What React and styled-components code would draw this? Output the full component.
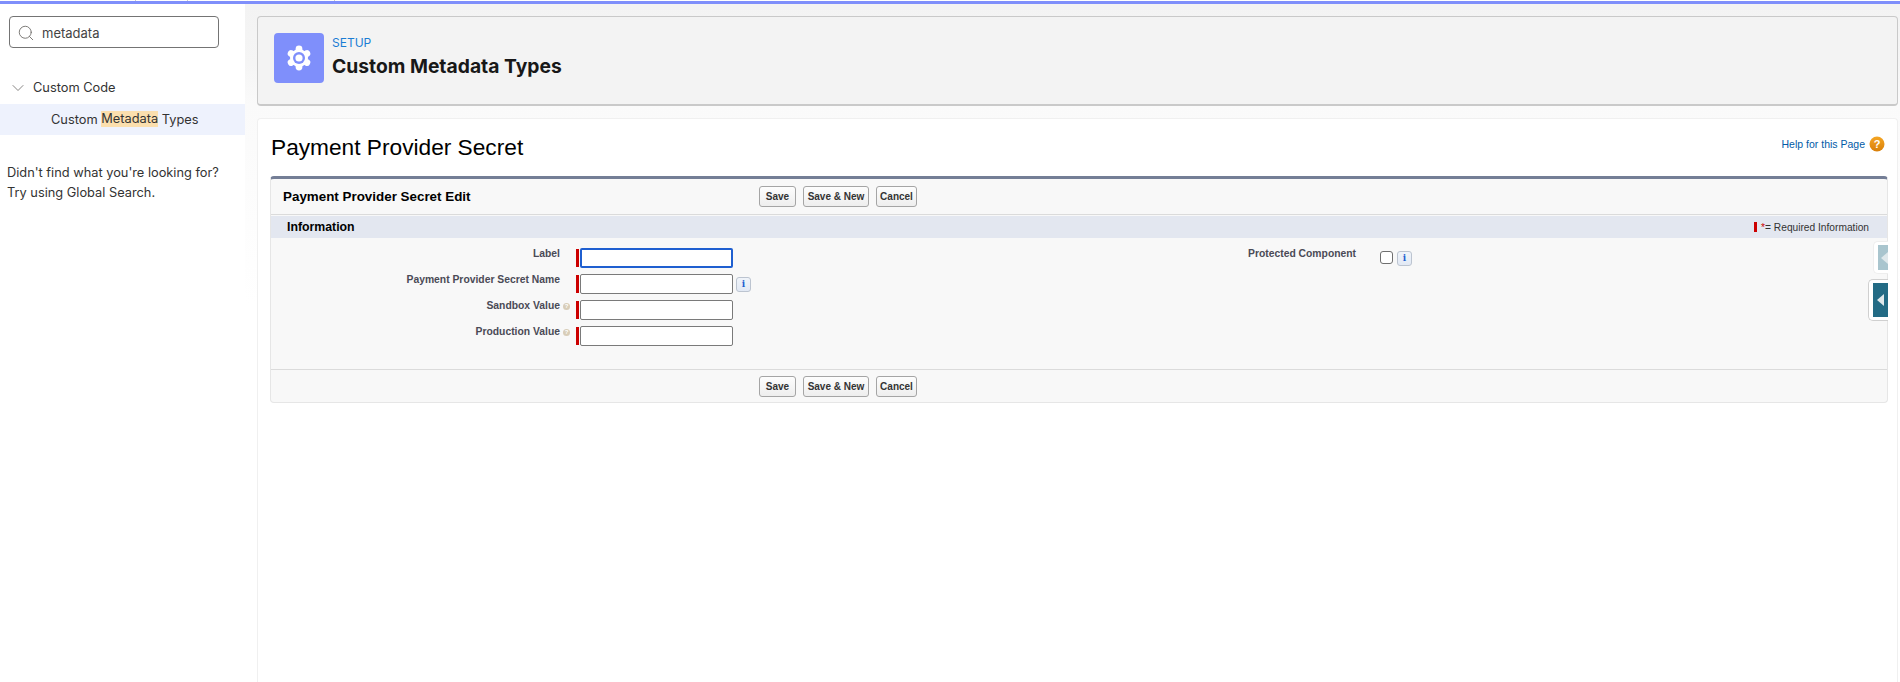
import React from "react";
import styled, { createGlobalStyle } from "styled-components";
import { Search, ChevronDown } from "lucide-react";

const GlobalStyle = createGlobalStyle`
  html, body { margin: 0; padding: 0; height: 100%; background: #fff; }
  #root { height: 100%; }
  * { box-sizing: border-box; }
`;

const Page = styled.div`
  width: 1900px;
  height: 682px;
  overflow: hidden;
  display: flex;
  flex-direction: column;
  background: #fff;
`;

const TopLine = styled.div`
  height: 4px;
  flex: none;
  border-bottom: 3px solid #7f8ffb;
  background:
    linear-gradient(#ccc, #ccc) 135px 0 / 1px 1px no-repeat,
    linear-gradient(#ccc, #ccc) 187px 0 / 1px 1px no-repeat,
    linear-gradient(#ccc, #ccc) 334px 0 / 1px 1px no-repeat,
    #fff;
`;

const Body = styled.div`
  flex: 1;
  display: flex;
  min-height: 0;
`;

/* left setup tree */
const Sidebar = styled.aside`
  width: 245px;
  flex: none;
  background: #fff;
  font-family: Inter, "Noto Sans", sans-serif;
  color: #333;
  padding-top: 12px;
`;

const SearchBox = styled.div`
  margin-left: 9px;
  width: 210px;
  height: 32px;
  border: 1px solid #747474;
  border-radius: 4px;
  display: flex;
  align-items: center;
  padding: 1px 0 0 7px;
  gap: 7px;
  font-size: 13px;
  color: #444;
`;

const TreeHead = styled.div`
  margin-top: 30px;
  height: 19px;
  display: flex;
  align-items: center;
  padding-left: 8px;
  gap: 5px;
  font-size: 12.8px;
`;

const TreeItem = styled.div`
  margin-top: 7px;
  height: 31px;
  background: #eef2fd;
  display: flex;
  align-items: center;
  padding: 0 0 1px 51px;
  font-size: 12.8px;
  white-space: pre;
`;

const Mark = styled.span`
  background: #fbdfae;
  line-height: 16px;
`;

const NotFound = styled.p`
  margin: 28px 0 0 7px;
  font-size: 12.8px;
  line-height: 20px;
`;

const Main = styled.main`
  flex: 1;
  min-width: 0;
  padding: 12px 2px 0 12px;
  background: linear-gradient(#f3f3f3 0, #f5f5f5 60px, #fafafa 100px, #fff 300px);
  display: flex;
  flex-direction: column;
  gap: 12px;
`;

const HeaderCard = styled.header`
  height: 90px;
  flex: none;
  border: 1px solid #c9c9c9;
  border-bottom-width: 2px;
  border-radius: 4px;
  background: #f3f3f3;
  display: flex;
  align-items: center;
  padding: 0 0 5px 16px;
  gap: 8px;
  font-family: Inter, "Noto Sans", sans-serif;
`;

const IconTile = styled.div`
  width: 50px;
  height: 50px;
  border-radius: 4px;
  background: #7f8ffb;
  display: flex;
  align-items: center;
  justify-content: center;
`;

const HeaderText = styled.div`
  display: flex;
  flex-direction: column;
  gap: 4px;
  padding-bottom: 4px;
`;

const Crumb = styled.div`
  font-size: 12px;
  line-height: 15px;
  color: #1b7dd4;
`;

const HeaderTitle = styled.h1`
  margin: 0;
  font-size: 19.3px;
  line-height: 24px;
  font-weight: 700;
  color: #181818;
`;

const ContentCard = styled.section`
  flex: 1;
  background: #fff;
  border-radius: 4px 4px 0 0;
  border: 1px solid #f0f0f0;
  border-bottom: none;
  padding: 0 9px 0 12px;
  position: relative;
  font-family: "Liberation Sans", Arial, sans-serif;
`;

const TitleRow = styled.div`
  height: 57px;
  display: flex;
  align-items: center;
  justify-content: space-between;
  padding: 0 0 1px 1px;
`;

const PageTitle = styled.h2`
  margin: 0;
  font-size: 22.7px;
  font-weight: 400;
  color: #000;
`;

const HelpLink = styled.a`
  display: flex;
  align-items: center;
  gap: 4px;
  font-size: 10.5px;
  color: #015ba7;
  margin: -6px 3px 0 0;
`;

const Panel = styled.div`
  border: 1px solid #e6e6e6;
  border-top: 3px solid #747e96;
  border-radius: 4px;
  background: #f8f8f8;
`;

const PanelHead = styled.div`
  height: 36px;
  display: flex;
  align-items: center;
  border-bottom: 1px solid #dbdbdb;
  padding-left: 12px;
`;

const PanelTitle = styled.div`
  width: 476px;
  flex: none;
  font-size: 13.4px;
  font-weight: 700;
  color: #000;
`;

const ButtonRow = styled.div`
  display: flex;
  gap: 7px;
`;

const Btn = styled.button`
  height: 21px;
  width: ${(p) => p.$w}px;
  padding: 0;
  border: 1px solid #a5a5a5;
  border-radius: 3px;
  background: linear-gradient(#fdfdfd, #eeeeee);
  font-family: inherit;
  font-size: 10px;
  font-weight: 700;
  color: #333;
`;

const SectionBar = styled.div`
  margin-top: 1px;
  height: 22px;
  background: #e3e7f0;
  display: flex;
  align-items: center;
  justify-content: space-between;
  padding: 0 18px 0 16px;
`;

const SectionTitle = styled.div`
  font-size: 12.3px;
  font-weight: 700;
  color: #000;
`;

const Legend = styled.div`
  display: flex;
  align-items: center;
  gap: 4px;
  font-size: 10.2px;
  color: #333;
`;

const LegendBar = styled.span`
  width: 3px;
  height: 10px;
  background: #c00;
`;

const Star = styled.span`
  color: #c00;
`;

const FormArea = styled.div`
  height: 132px;
  display: flex;
  padding-top: 9px;
  border-bottom: 1px solid #dbdbdb;
`;

const Column = styled.div`
  width: ${(p) => p.$w}px;
  flex: none;
  display: flex;
  flex-direction: column;
  gap: 6px;
`;

const Row = styled.div`
  height: 20px;
  display: flex;
`;

const FieldLabel = styled.label`
  width: ${(p) => p.$w}px;
  flex: none;
  text-align: right;
  font-size: 10.35px;
  line-height: 11px;
  padding-top: 1px;
  font-weight: 700;
  color: #4a4a56;
  white-space: nowrap;
  position: relative;
`;

const HelpDot = styled.span`
  position: absolute;
  right: -10px;
  top: 4px;
  width: 7px;
  height: 7px;
  border-radius: 50%;
  background: #d8cdb8;
  color: #fff;
  font-size: 6px;
  line-height: 7px;
  text-align: center;
`;

const RequiredBar = styled.span`
  width: 3px;
  height: 18px;
  margin: 2px 1px 0 16px;
  background: #c00;
  flex: none;
`;

const TextInput = styled.input`
  width: 153px;
  height: 20px;
  margin-top: 1px;
  padding: 0 4px;
  background: #fff;
  border: 1px solid #7a7a7a;
  border-radius: 2px;
  outline: none;
  ${(p) => p.$focused && "border: 2px solid #1f5fd0;"}
`;

const InfoBtn = styled.span`
  width: 15px;
  height: 15px;
  margin: 4px 0 0 ${(p) => p.$ml}px;
  flex: none;
  border: 1px solid #bcc4d0;
  border-radius: 3px;
  background: linear-gradient(#f0f4fa, #e2e9f4);
  color: #1f5fd0;
  font-family: "DejaVu Serif", serif;
  font-size: 9px;
  font-weight: 700;
  line-height: 13px;
  text-align: center;
`;

const Check = styled.input`
  width: 13px;
  height: 13px;
  margin: 4px 0 0 24px;
  appearance: none;
  background: #fff;
  border: 1px solid #6f6f6f;
  border-radius: 3px;
  flex: none;
`;

const PanelFoot = styled.div`
  height: 32px;
  display: flex;
  align-items: center;
  padding-left: 488px;
`;

/* collapse handles sit over the panel's right edge */
const SideTab = styled.div`
  position: absolute;
  right: 9px;
  top: ${(p) => p.$top}px;
  width: ${(p) => p.$w}px;
  height: ${(p) => p.$h}px;
  background: #fff;
  border: 1px solid ${(p) => p.$line};
  border-right: none;
  border-radius: 5px 0 0 5px;
  padding: 3px 0 3px 4px;
`;

const TabFace = styled.div`
  height: 100%;
  background: ${(p) => p.$color};
  display: flex;
  align-items: center;
  padding-left: ${(p) => p.$pad}px;
`;

const Arrow = styled.span`
  width: 0;
  height: 0;
  border-top: 6px solid transparent;
  border-bottom: 6px solid transparent;
  border-right: 7px solid ${(p) => p.$color};
`;

const Gear = () => (
  <svg width="26" height="26" viewBox="0 0 26 26" aria-hidden="true">
    {[0, 60, 120, 180, 240, 300].map((a) => (
      <circle key={a} cx="13" cy="3.9" r="3.4" fill="#fff" transform={`rotate(${a} 13 13)`} />
    ))}
    <circle cx="13" cy="13" r="9" fill="#fff" />
    <circle cx="13" cy="13" r="6" fill="#7f8ffb" />
    <circle cx="13" cy="13" r="3.6" fill="#fff" />
  </svg>
);

const HelpIcon = () => (
  <svg width="16" height="16" viewBox="0 0 16 16" aria-hidden="true">
    <defs>
      <linearGradient id="helpFill" x1="0" y1="0" x2="0" y2="1">
        <stop offset="0" stopColor="#f5a623" />
        <stop offset="1" stopColor="#d87f0a" />
      </linearGradient>
    </defs>
    <circle cx="8" cy="8" r="7.5" fill="url(#helpFill)" />
    <text x="8" y="12" textAnchor="middle" fontSize="11" fontWeight="700" fill="#fff" fontFamily="Liberation Sans">?</text>
  </svg>
);

const Buttons = () => (
  <ButtonRow>
    <Btn $w={37}>Save</Btn>
    <Btn $w={66}>Save &amp; New</Btn>
    <Btn $w={41}>Cancel</Btn>
  </ButtonRow>
);

const App = () => (
  <Page>
    <GlobalStyle />
    <TopLine />
    <Body>
      <Sidebar>
        <SearchBox>
          <Search size={18} strokeWidth={1.2} color="#706e6b" />
          metadata
        </SearchBox>
        <TreeHead>
          <ChevronDown size={20} strokeWidth={1} color="#706e6b" />
          Custom Code
        </TreeHead>
        <TreeItem>
          Custom <Mark>Metadata</Mark> Types
        </TreeItem>
        <NotFound>
          Didn't find what you're looking for?
          <br />
          Try using Global Search.
        </NotFound>
      </Sidebar>
      <Main>
        <HeaderCard>
          <IconTile>
            <Gear />
          </IconTile>
          <HeaderText>
            <Crumb>SETUP</Crumb>
            <HeaderTitle>Custom Metadata Types</HeaderTitle>
          </HeaderText>
        </HeaderCard>
        <ContentCard>
          <TitleRow>
            <PageTitle>Payment Provider Secret</PageTitle>
            <HelpLink>
              Help for this Page <HelpIcon />
            </HelpLink>
          </TitleRow>
          <Panel>
            <PanelHead>
              <PanelTitle>Payment Provider Secret Edit</PanelTitle>
              <Buttons />
            </PanelHead>
            <SectionBar>
              <SectionTitle>Information</SectionTitle>
              <Legend>
                <LegendBar />
                <span>
                  <Star>*</Star>= Required Information
                </span>
              </Legend>
            </SectionBar>
            <FormArea>
              <Column $w={977}>
                <Row>
                  <FieldLabel $w={289}>Label</FieldLabel>
                  <RequiredBar />
                  <TextInput $focused />
                </Row>
                <Row>
                  <FieldLabel $w={289}>Payment Provider Secret Name</FieldLabel>
                  <RequiredBar />
                  <TextInput />
                  <InfoBtn $ml={3}>i</InfoBtn>
                </Row>
                <Row>
                  <FieldLabel $w={289}>
                    Sandbox Value
                    <HelpDot>?</HelpDot>
                  </FieldLabel>
                  <RequiredBar />
                  <TextInput />
                </Row>
                <Row>
                  <FieldLabel $w={289}>
                    Production Value
                    <HelpDot>?</HelpDot>
                  </FieldLabel>
                  <RequiredBar />
                  <TextInput />
                </Row>
              </Column>
              <Column $w={300}>
                <Row>
                  <FieldLabel $w={108}>Protected Component</FieldLabel>
                  <Check type="checkbox" />
                  <InfoBtn $ml={4}>i</InfoBtn>
                </Row>
              </Column>
            </FormArea>
            <PanelFoot>
              <Buttons />
            </PanelFoot>
          </Panel>
          <SideTab $top={122} $w={15} $h={33} $line="#eeeeee">
            <TabFace $color="#a9c5ce" $pad={3}>
              <Arrow $color="#dfe8eb" />
            </TabFace>
          </SideTab>
          <SideTab $top={160} $w={20} $h={42} $line="#d0d0d0">
            <TabFace $color="#236b85" $pad={4}>
              <Arrow $color="#dfe8eb" />
            </TabFace>
          </SideTab>
        </ContentCard>
      </Main>
    </Body>
  </Page>
);

export default App;
